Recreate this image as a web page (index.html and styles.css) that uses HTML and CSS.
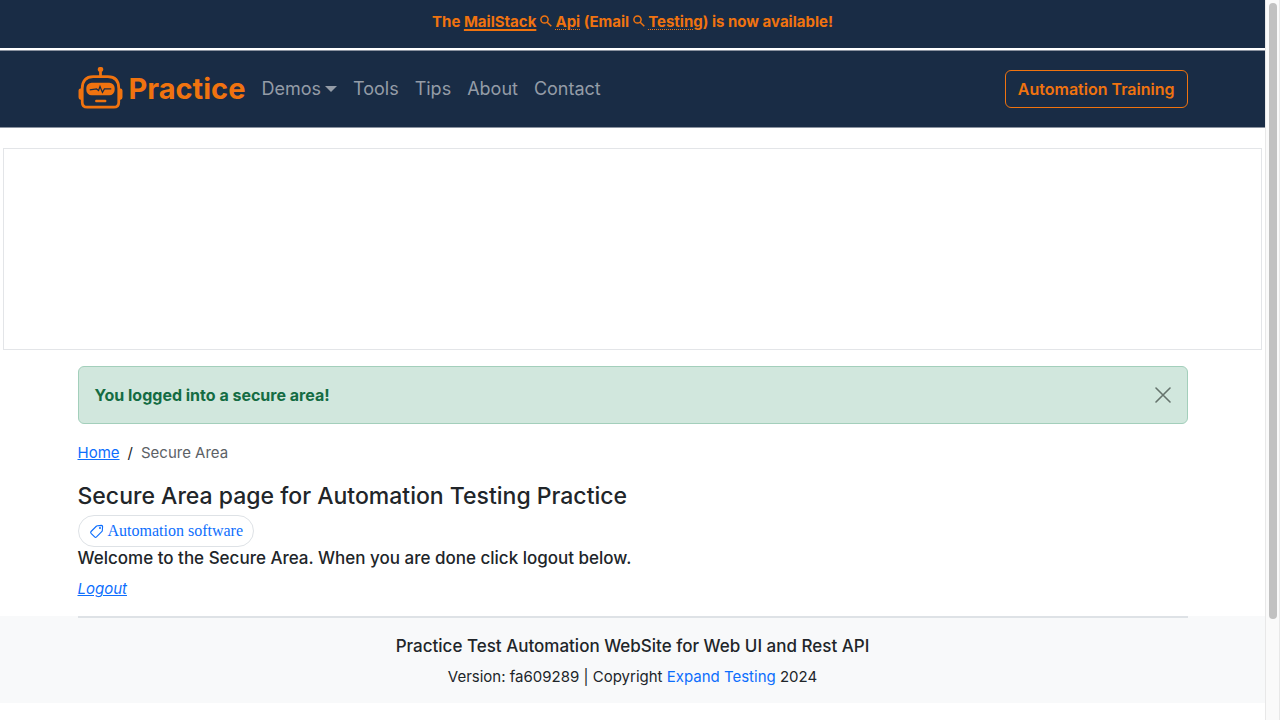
FILE: index.html
```html
<!DOCTYPE html>
<html lang="en">
<head>
<meta charset="utf-8">
<meta name="viewport" content="width=device-width, initial-scale=1">
<title>Secure Area page for Automation Testing Practice</title>
<link rel="stylesheet" href="styles.css">
</head>
<body>
<div class="page">
  <div class="announcement">
    <span>The <a href="#mailstack">MailStack</a>
    <svg class="search-icon" viewBox="0 0 12 12" aria-hidden="true"><circle cx="4.5" cy="4.5" r="3.6"/><path d="M7.2 7.2 11.3 11.3"/></svg>
    <a class="dotted" href="#api">Api</a> (Email
    <svg class="search-icon" viewBox="0 0 12 12" aria-hidden="true"><circle cx="4.5" cy="4.5" r="3.6"/><path d="M7.2 7.2 11.3 11.3"/></svg>
    <a class="dotted" href="#testing">Testing</a>) is now available!</span>
  </div>
  <header class="navbar">
    <div class="container navbar-inner">
      <a class="brand" href="#home">
        <svg class="robot" viewBox="0 0 45 43" aria-hidden="true">
          <g fill="none" stroke="#f0730f" stroke-width="2.8">
            <path d="M22.5 4v6"/>
            <path d="M3.8 22Q3.800 9.800 15 9.800H30Q41.200 9.800 41.200 22V36q0 5.200-5.200 5.200H9q-5.200 0-5.200-5.200Z"/>
          </g>
          <g fill="#f0730f">
            <rect x="19.7" y="0" width="5.6" height="4.8" rx="2"/>
            <path d="M3.5 22H2q-2 0-2 2v7q0 2.500 2 2.500h1.500zM41.500 22H43q2 0 2 2v7q0 2.500-2 2.500h-1.500z"/>
            <rect x="8" y="16" width="29" height="13" rx="5.500"/>
            <rect x="17" y="33.500" width="11.500" height="2.600" rx="1"/>
          </g>
          <path d="M11.500 23.500 18.500 22.500 20.500 24 22 20 24.500 26 26.500 22.500H33.500" fill="none" stroke="#192c45" stroke-width="1.300"/>
        </svg>
        <span>Practice</span>
      </a>
      <nav class="nav-links">
        <a class="dropdown" href="#demos">Demos</a>
        <a href="#tools">Tools</a>
        <a href="#tips">Tips</a>
        <a href="#about">About</a>
        <a href="#contact">Contact</a>
      </nav>
      <a class="training" href="#training">Automation Training</a>
    </div>
  </header>
  <div class="ad-slot"></div>
  <main class="container">
    <div class="alert" role="alert">
      <b>You logged into a secure area!</b>
      <button class="close" type="button" aria-label="Close">
        <svg viewBox="0 0 16 16" aria-hidden="true"><path d="M1 1 15 15M15 1 1 15"/></svg>
      </button>
    </div>
    <nav class="breadcrumb" aria-label="Breadcrumb">
      <a href="#home">Home</a><span class="slash">/</span><span class="current">Secure Area</span>
    </nav>
    <h1>Secure Area page for Automation Testing Practice</h1>
    <a class="tag" href="#software">
      <svg viewBox="0 0 16 16" aria-hidden="true"><path d="M9 1.800 13.300 1.500Q14.500 1.500 14.500 2.700L14.200 7Q14.100 7.700 13.600 8.200L8 13.800Q7 14.700 6 13.800L2.200 10Q1.300 9 2.200 8L7.800 2.400Q8.300 1.900 9 1.800Z"/><circle cx="11.700" cy="4.300" r=".5"/></svg>
      <span>Automation software</span>
    </a>
    <h2>Welcome to the Secure Area. When you are done click logout below.</h2>
    <a class="logout" href="#logout">Logout</a>
  </main>
  <footer class="footer">
    <div class="container"><hr></div>
    <h3>Practice Test Automation WebSite for Web UI and Rest API</h3>
    <p>Version: fa609289 | Copyright <a href="#expand">Expand Testing</a> 2024</p>
  </footer>
</div>
<div class="scrollbar" aria-hidden="true"><div class="thumb"></div></div>
</body>
</html>
```
FILE: styles.css
```css
* { box-sizing: border-box; }

body {
  margin: 0;
  display: grid;
  grid-template-columns: minmax(0, 1fr) 15px;
  font: 400 15px/24px Inter, "Liberation Sans", sans-serif;
  color: #212529;
  background: #fff;
}

a { color: #0d6efd; }

.container {
  width: 100%;
  max-width: 1110px;
  margin: 0 auto;
}

.announcement {
  padding: 10px 16px 14px;
  border-bottom: 2px solid #fff;
  background: #192c45;
  color: #f0730f;
  font-size: 15px;
  font-weight: 700;
  text-align: center;
}
.announcement a {
  color: inherit;
  text-decoration-thickness: 2px;
  text-underline-offset: 2px;
}
.announcement .dotted {
  text-decoration-style: dotted;
  text-decoration-thickness: 1px;
}
.search-icon {
  width: 12px;
  height: 12px;
  fill: none;
  stroke: currentColor;
  stroke-width: 1.5;
}

.navbar {
  padding: 16px 0;
  border-top: 1px solid #8b93a0;
  border-bottom: 1px solid #8b93a0;
  background: #192c45;
}
.navbar-inner { display: flex; align-items: center; }
.brand {
  display: flex;
  align-items: flex-start;
  gap: 6px;
  color: #f0730f;
  font-size: 29px;
  font-weight: 700;
  line-height: 44px;
  text-decoration: none;
}
.robot { width: 45px; height: 42px; }
.nav-links { display: flex; gap: 16px; margin-left: 16px; }
.nav-links a {
  color: #949ca7;
  font-size: 18px;
  text-decoration: none;
}
.dropdown { display: flex; align-items: center; gap: 4px; }
.dropdown::after {
  content: "";
  border: 6px solid transparent;
  border-top-color: currentColor;
  border-bottom: 0;
}
.training {
  margin-left: auto;
  padding: 6px 12px;
  border: 1px solid #f0730f;
  border-radius: 6px;
  color: #f0730f;
  font-size: 16px;
  font-weight: 600;
  text-decoration: none;
}

.ad-slot {
  height: 202px;
  margin: 20px 3px 16px;
  border: 1px solid #e3e5e8;
}

.alert {
  display: flex;
  align-items: center;
  justify-content: space-between;
  padding: 16px;
  border: 1px solid #a3cfbb;
  border-radius: 6px;
  background: #d1e7dd;
  color: #146c43;
  font-size: 16px;
}
.close {
  width: 16px;
  height: 16px;
  padding: 0;
  border: 0;
  background: none;
}
.close svg {
  display: block;
  stroke: #65736c;
  stroke-width: 1.6;
  stroke-linecap: round;
}

.breadcrumb { display: flex; gap: 8px; margin: 17px 0 16px; }
.current { color: #5c6166; }

h1 { margin: 0; font-size: 23px; font-weight: 500; line-height: 30px; }
.tag {
  display: flex;
  align-items: center;
  gap: 4px;
  width: fit-content;
  margin-top: 4px;
  padding: 3px 10px;
  border: 1px solid #dee2e6;
  border-radius: 16px;
  font: 16px/24px "Liberation Serif", serif;
  text-decoration: none;
}
.tag svg { width: 15px; height: 15px; fill: none; stroke: currentColor; stroke-width: 1.2; }
h2, h3 { margin: 0; font-size: 17px; font-weight: 500; line-height: 22px; }
.logout { display: block; width: fit-content; margin: 8px 0 15px; font-style: italic; }

.footer { padding-bottom: 14px; background: #f8f9fa; text-align: center; }
.footer hr { margin: 0 0 17px; border: 0; border-top: 2px solid #dee2e6; }
.footer p { margin: 8px 0 0; }
.footer a { text-decoration: none; }

.scrollbar {
  position: sticky;
  top: 0;
  height: 100vh;
  padding: 3px;
  border: 1px solid #e8e8e8;
  border-width: 0 1px;
  background: #fafafa;
}
.thumb { width: 8px; height: 86.3%; border-radius: 4px; background: #c1c1c1; }
```
